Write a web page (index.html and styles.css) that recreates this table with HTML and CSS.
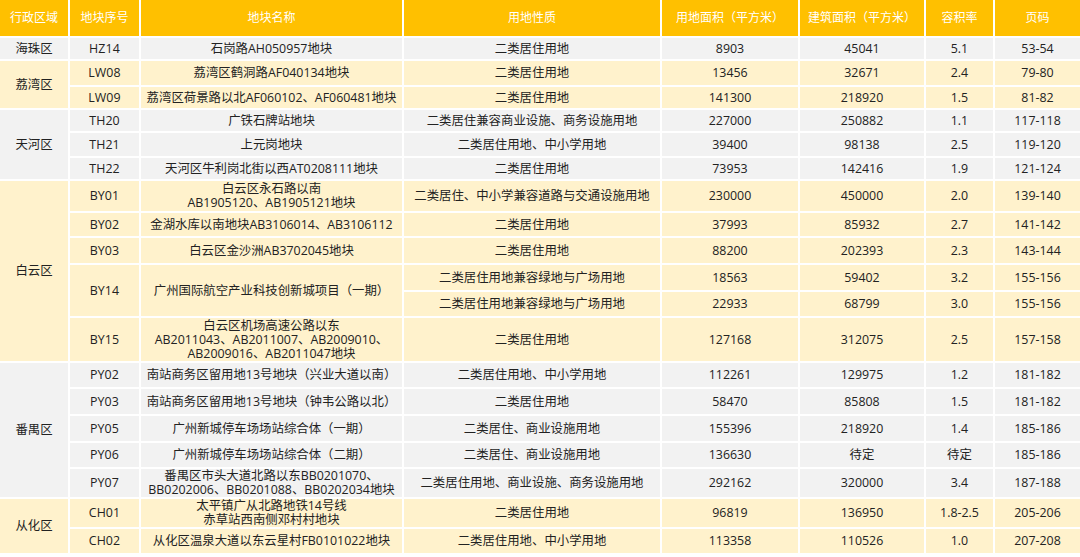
FILE: index.html
```html
<!DOCTYPE html>
<html lang="zh-CN">
<head>
<meta charset="utf-8">
<title>地块列表</title>
<link rel="stylesheet" href="styles.css">
</head>
<body>
<table class="plots">
  <colgroup>
    <col class="c1"><col class="c2"><col class="c3"><col class="c4"><col class="c5"><col class="c6"><col class="c7"><col class="c8">
  </colgroup>
  <thead>
    <tr class="h38">
      <th>行政区域</th><th>地块序号</th><th>地块名称</th><th>用地性质</th><th>用地面积（平方米）</th><th>建筑面积（平方米）</th><th>容积率</th><th>页码</th>
    </tr>
  </thead>
  <tbody class="gray">
    <tr class="h23"><td>海珠区</td><td class="code">HZ14</td><td>石岗路AH050957地块</td><td>二类居住用地</td><td>8903</td><td>45041</td><td>5.1</td><td>53-54</td></tr>
  </tbody>
  <tbody class="yellow">
    <tr class="h26"><td rowspan="2">荔湾区</td><td class="code">LW08</td><td>荔湾区鹤洞路AF040134地块</td><td>二类居住用地</td><td>13456</td><td>32671</td><td>2.4</td><td>79-80</td></tr>
    <tr class="h23"><td class="code">LW09</td><td>荔湾区荷景路以北AF060102、AF060481地块</td><td>二类居住用地</td><td>141300</td><td>218920</td><td>1.5</td><td>81-82</td></tr>
  </tbody>
  <tbody class="gray">
    <tr class="h23"><td rowspan="3">天河区</td><td class="code">TH20</td><td>广铁石牌站地块</td><td>二类居住兼容商业设施、商务设施用地</td><td>227000</td><td>250882</td><td>1.1</td><td>117-118</td></tr>
    <tr class="h25"><td class="code">TH21</td><td>上元岗地块</td><td>二类居住用地、中小学用地</td><td>39400</td><td>98138</td><td>2.5</td><td>119-120</td></tr>
    <tr class="h23"><td class="code">TH22</td><td>天河区牛利岗北街以西AT0208111地块</td><td>二类居住用地</td><td>73953</td><td>142416</td><td>1.9</td><td>121-124</td></tr>
  </tbody>
  <tbody class="yellow">
    <tr class="h32"><td rowspan="6">白云区</td><td class="code">BY01</td><td>白云区永石路以南<br>AB1905120、AB1905121地块</td><td>二类居住、中小学兼容道路与交通设施用地</td><td>230000</td><td>450000</td><td>2.0</td><td>139-140</td></tr>
    <tr class="h25"><td class="code">BY02</td><td>金湖水库以南地块AB3106014、AB3106112</td><td>二类居住用地</td><td>37993</td><td>85932</td><td>2.7</td><td>141-142</td></tr>
    <tr class="h27"><td class="code">BY03</td><td>白云区金沙洲AB3702045地块</td><td>二类居住用地</td><td>88200</td><td>202393</td><td>2.3</td><td>143-144</td></tr>
    <tr class="h27"><td class="code" rowspan="2">BY14</td><td rowspan="2">广州国际航空产业科技创新城项目（一期）</td><td>二类居住用地兼容绿地与广场用地</td><td>18563</td><td>59402</td><td>3.2</td><td>155-156</td></tr>
    <tr class="h26"><td>二类居住用地兼容绿地与广场用地</td><td>22933</td><td>68799</td><td>3.0</td><td>155-156</td></tr>
    <tr class="h45"><td class="code">BY15</td><td>白云区机场高速公路以东<br>AB2011043、AB2011007、AB2009010、<br>AB2009016、AB2011047地块</td><td>二类居住用地</td><td>127168</td><td>312075</td><td>2.5</td><td>157-158</td></tr>
  </tbody>
  <tbody class="gray">
    <tr class="h26"><td rowspan="5">番禺区</td><td class="code">PY02</td><td>南站商务区留用地13号地块（兴业大道以南）</td><td>二类居住用地、中小学用地</td><td>112261</td><td>129975</td><td>1.2</td><td>181-182</td></tr>
    <tr class="h27"><td class="code">PY03</td><td>南站商务区留用地13号地块（钟韦公路以北）</td><td>二类居住用地</td><td>58470</td><td>85808</td><td>1.5</td><td>181-182</td></tr>
    <tr class="h27"><td class="code">PY05</td><td>广州新城停车场场站综合体（一期）</td><td>二类居住、商业设施用地</td><td>155396</td><td>218920</td><td>1.4</td><td>185-186</td></tr>
    <tr class="h26"><td class="code">PY06</td><td>广州新城停车场场站综合体（二期）</td><td>二类居住、商业设施用地</td><td>136630</td><td>待定</td><td>待定</td><td>185-186</td></tr>
    <tr class="h30"><td class="code">PY07</td><td>番禺区市头大道北路以东BB0201070、<br>BB0202006、BB0201088、BB0202034地块</td><td>二类居住用地、商业设施、商务设施用地</td><td>292162</td><td>320000</td><td>3.4</td><td>187-188</td></tr>
  </tbody>
  <tbody class="yellow">
    <tr class="h30"><td rowspan="2">从化区</td><td class="code">CH01</td><td>太平镇广从北路地铁14号线<br>赤草站西南侧邓村村地块</td><td>二类居住用地</td><td>96819</td><td>136950</td><td>1.8-2.5</td><td>205-206</td></tr>
    <tr class="h26"><td class="code">CH02</td><td>从化区温泉大道以东云星村FB0101022地块</td><td>二类居住用地、中小学用地</td><td>113358</td><td>110526</td><td>1.0</td><td>207-208</td></tr>
  </tbody>
</table>
</body>
</html>
```

FILE: styles.css
```css
html, body {
  margin: 0;
  padding: 0;
  background: #ffffff;
}

body {
  width: 1080px;
  height: 557px;
  overflow: hidden;
  font-family: "Open Sans", "Noto Sans CJK SC", sans-serif;
  font-size: 12.4px;
  color: #222222;
}

.plots {
  width: 1080px;
  table-layout: fixed;
  border-collapse: separate;
  border-spacing: 0;
}

.c1 { width: 70px; }
.c2 { width: 71px; }
.c3 { width: 263px; }
.c4 { width: 258px; }
.c5 { width: 138px; }
.c6 { width: 126px; }
.c7 { width: 69px; }
.c8 { width: 85px; }

.plots th,
.plots td {
  box-sizing: border-box;
  padding: 0 2px;
  border-right: 2px solid #ffffff;
  border-bottom: 2px solid #ffffff;
  text-align: center;
  vertical-align: middle;
  line-height: 14px;
  font-weight: normal;
  white-space: nowrap;
  overflow: visible;
}

.plots th:last-child,
.plots td:last-child {
  border-right: 0;
}

.plots th {
  background: #ffc000;
  color: #ffffff;
  font-size: 12px;
}

.gray td { background: #f2f2f2; }
.yellow td { background: #fff2cc; }

.code { letter-spacing: 0.1px; }

.h23 > * { height: 23px; }
.h25 > * { height: 25px; }
.h26 > * { height: 26px; }
.h27 > * { height: 27px; }
.h30 > * { height: 30px; }
.h32 > * { height: 32px; }
.h38 > * { height: 38px; }
.h45 > * { height: 45px; }
```
